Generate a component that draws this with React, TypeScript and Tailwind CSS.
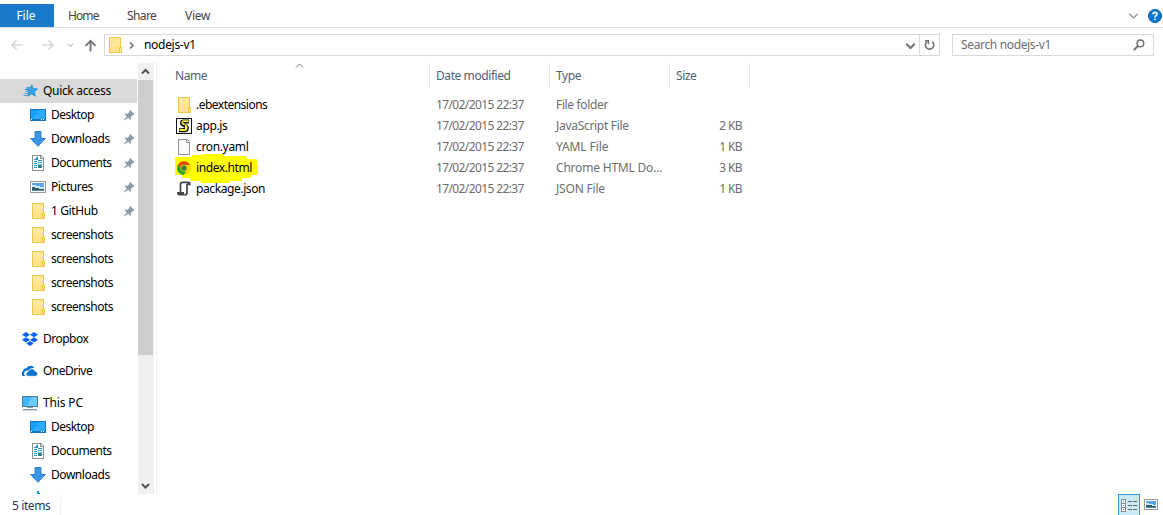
import type { ReactNode } from "react";

type Kind = "desktop" | "download" | "document" | "picture" | "folder" | "music";

function Folder() {
  return (
    <svg width="16" height="16" viewBox="0 0 16 16" shapeRendering="crispEdges">
      <path d="M2 0h12v10h1v6H2z" fill="#e9c84c" />
      <path d="M3 1h10v9h-1v5H3z" fill="#ffe79c" />
      <path d="M3 9h9v6H3z" fill="#ffe28a" />
      <path d="M13 11h1v4h-1z" fill="#ffe79c" />
    </svg>
  );
}

function Desktop() {
  return (
    <svg width="16" height="16" viewBox="0 0 16 16" shapeRendering="crispEdges">
      <path d="M0 2h16v12H0z" fill="#1677bd" />
      <path d="M1 3h14v9H1z" fill="#18a1fb" />
      <path d="M9 3h6v9H3z" fill="#2eabfc" />
      <path d="M1 12h1v1H1zM11 12h1v1h-1zM13 12h1v1h-1z" fill="#fff" />
    </svg>
  );
}

function Download() {
  return (
    <svg width="16" height="16" viewBox="0 0 16 16">
      <path d="M5 .5h6v7h4.3L8 15.3.7 7.5H5z" fill="#3b96e8" stroke="#2d82cf" />
    </svg>
  );
}

function Document() {
  return (
    <svg width="16" height="16" viewBox="0 0 16 16" shapeRendering="crispEdges">
      <path d="M2 0h9l3 3v13H2z" fill="#8a9090" />
      <path d="M3 1h7v3h3v11H3z" fill="#fff" />
      <path d="M11 1l2 2h-2z" fill="#e7e7e7" />
      <path d="M6 2h2v3H6zM4 4h2v1H4zM4 6h3v1H4zM8 5h4v1H8zM8 7h4v1H8zM4 8h3v1H4zM4 10h3v1H4zM4 12h3v1H4z" fill="#2592d5" />
      <path d="M8 10h4v3H8z" fill="#437889" />
      <path d="M8 9h4v1H8z" fill="#83c5f3" />
    </svg>
  );
}

function Picture({ compact = false }: { compact?: boolean }) {
  return (
    <svg width={compact ? 14 : 16} height={compact ? 11 : 12} viewBox="0 0 16 12" preserveAspectRatio="none" shapeRendering="crispEdges">
      <path d="M0 0h16v12H0z" fill="#999" />
      <path d="M1 1h14v10H1z" fill="#fff" />
      <path d="M2 2h12v8H2z" fill="#5aa5e9" />
      <path d="M2 4h4v1h4v1h4v2H2z" fill="#cde8f7" />
      <path d="M2 6h3v1h4v1h5v2H2z" fill="#315c61" />
      <path d="M2 9h12v1H2z" fill="#5285a9" />
    </svg>
  );
}

function QuickStar() {
  return (
    <svg width="16" height="16" viewBox="0 0 16 16">
      <path d="M4.5 4.5h4M2.5 6.5h4M3.5 8.5h3M2.5 10.5h4M1.5 12.5h4" stroke="#4a9dcc" />
      <path d="M9.8 1.8l1.5 3.9 4.2.2-3.2 2.9 1 4.4-3.7-2.5-3.8 2.5 1.3-4.4-2.9-2.9 3.9-.2z" fill="#34a4f3" stroke="#1785cc" strokeWidth=".8" />
    </svg>
  );
}

function Dropbox() {
  return (
    <svg width="16" height="16" viewBox="0 0 16 16">
      <path d="M4 1l4 2.7-4 2.5L0 3.7zM12 1l4 2.7-4 2.5-4-2.5zM4 6.2l4 2.6-4 2.6-4-2.6zM12 6.2l4 2.6-4 2.6-4-2.6zM4.3 12.4L8 9.9l3.7 2.5L8 15z" fill="#0b63f6" />
    </svg>
  );
}

function OneDrive() {
  return (
    <svg width="16" height="16" viewBox="0 0 16 16">
      <path d="M3.5 13H2a2.5 2.5 0 01-1-4.8 3.1 3.1 0 013.5-3A4.4 4.4 0 0112.4 5 5 5 0 007 8.2 2.8 2.8 0 003.5 13z" fill="#0871c9" />
      <path d="M6.2 13.3a2.3 2.3 0 01-.1-4.6 3.8 3.8 0 017.2-.5 2.6 2.6 0 01.5 5.1z" fill="#0871c9" stroke="#fff" strokeWidth=".8" />
    </svg>
  );
}

function Computer() {
  return (
    <svg width="16" height="16" viewBox="0 0 16 16" shapeRendering="crispEdges">
      <path d="M0 1h16v11H0z" fill="#477b98" />
      <path d="M1 2h14v9H1z" fill="#42b7fb" />
      <path d="M10 2h5v9H5z" fill="#6dcafe" />
      <path d="M5 12h6v1H5zM1 14h14v1H1z" fill="#879ba8" />
      <path d="M0 15h16v1H0z" fill="#d0d8dd" />
    </svg>
  );
}

function Pin() {
  return (
    <svg width="11" height="11" viewBox="0 0 11 11">
      <path d="M6.1 0l4.6 4.5-1.1.8-.8-.2-1.9 2 .2 2-.8.8-2.2-2.2L.5 10.5 0 10l2.8-3.5L.7 4.4l.8-.8 2.1.2 1.9-1.9-.2-.9z" fill="#8e9ba4" />
    </svg>
  );
}

function ScriptIcon() {
  return (
    <svg width="16" height="16" viewBox="0 0 16 16">
      <path d="M.5.5h15v15H.5z" fill="#fff" stroke="#111" shapeRendering="crispEdges" />
      <g fill="none" strokeLinejoin="round">
        <path d="M13 3.5H7.5C5.5 3.5 5.5 5.5 7 6.3l2.7 1.8C11.5 9.5 11 12.2 9 12.2H3" stroke="#111" strokeWidth="4" />
        <path d="M12.5 3.3H7.5C6 3.5 6 5 7.5 6l2.2 1.7C11 9.2 10.8 11.7 9 12H3.5" stroke="#f5ee25" strokeWidth="2" />
      </g>
      <path d="M7 4h4v1H7zM6 10h3v1H6zM7 7h2v1H7z" fill="#111" shapeRendering="crispEdges" />
      <path d="M8 3h2v1H8zM9 9h1v2H9z" fill="#fff" shapeRendering="crispEdges" />
    </svg>
  );
}

function Blank() {
  return (
    <svg width="16" height="16" viewBox="0 0 16 16" shapeRendering="crispEdges">
      <path d="M2 0h9l3 3v13H2z" fill="#929292" />
      <path d="M3 1h7v3h3v11H3z" fill="#fafafa" />
      <path d="M11 1l2 2h-2z" fill="#eee" />
    </svg>
  );
}

function Chrome() {
  return (
    <svg width="16" height="16" viewBox="0 0 16 16">
      <circle cx="8" cy="8" r="6.8" fill="#ffd400" />
      <path d="M1.9 5A6.8 6.8 0 0114.1 5H8a3 3 0 00-2.8 4.1z" fill="#e04a0c" />
      <path d="M2.1 4.5A6.8 6.8 0 008 14.8l2.7-4.5A3.1 3.1 0 015.2 9z" fill="#2ca52b" />
      <circle cx="8" cy="8" r="3.3" fill="#d5d822" />
      <circle cx="8" cy="8" r="2.6" fill="#3d7a34" />
    </svg>
  );
}

function JsonScroll() {
  return (
    <svg width="16" height="16" viewBox="0 0 16 16">
      <path d="M4.5 11V3.4c0-1.4.7-2 1.9-2h6.2M11 3v8.3c0 1.7-.8 2.5-2.2 2.5" fill="none" stroke="#444" strokeWidth="1.7" />
      <path d="M11 .8h2c1.2 0 1.7.8 1.7 2.4v1H11.5zM1 11h7c0 1.2.3 2 1.2 3.6H3.2C1.6 14.6.9 13.2 1 11z" fill="#444" />
    </svg>
  );
}

const icons: Record<Kind, ReactNode> = {
  desktop: <Desktop />,
  download: <Download />,
  document: <Document />,
  picture: <Picture />,
  folder: <Folder />,
  music: (
    <svg width="16" height="16" viewBox="0 0 16 16" shapeRendering="crispEdges">
      <path d="M7 0h2v2h1v1h1v3H9v7H7z" fill="#189be9" />
    </svg>
  ),
};

function Item({ kind, label, pinned, tracking }: { kind: Kind; label?: string; pinned?: boolean; tracking?: string }) {
  return (
    <div className="flex h-6 shrink-0 items-center pl-[30px] pr-[2px]">
      <span className="mr-[5px] flex w-4 justify-center">{icons[kind]}</span>
      <span className={"flex-1 whitespace-nowrap " + (tracking ?? "tracking-[-0.45px]")}>{label}</span>
      {pinned && <Pin />}
    </div>
  );
}

function Root({ icon, label, className = "" }: { icon: ReactNode; label: string; className?: string }) {
  return (
    <div className={"flex h-6 shrink-0 items-center gap-[5px] pl-[22px] " + className}>
      {icon}
      <span>{label}</span>
    </div>
  );
}

const files = [
  { icon: <Folder />, name: ".ebextensions", type: "File folder", size: "", nameTracking: "tracking-[-0.52px]", typeTracking: "tracking-[-0.35px]" },
  { icon: <ScriptIcon />, name: "app.js", type: "JavaScript File", size: "2 KB", nameTracking: "tracking-[-0.35px]", typeTracking: "tracking-[-0.3px]" },
  { icon: <Blank />, name: "cron.yaml", type: "YAML File", size: "1 KB", nameTracking: "tracking-[-0.35px]", typeTracking: "tracking-[-0.1px]" },
  { icon: <Chrome />, name: "index.html", type: "Chrome HTML Do...", size: "3 KB", marked: true, nameTracking: "tracking-[-0.4px]", typeTracking: "tracking-[-0.2px]" },
  { icon: <JsonScroll />, name: "package.json", type: "JSON File", size: "1 KB", nameTracking: "tracking-[-0.4px]", typeTracking: "tracking-[-0.2px]" },
];

function Chevron({ className = "", dir = "down", size = 9 }: { className?: string; dir?: "down" | "up" | "right"; size?: number }) {
  const d = { down: "M1 3l3.5 3.5L8 3", up: "M1 6.5L4.5 3 8 6.5", right: "M3 1.5l3 3-3 3" }[dir];
  return (
    <svg width={size} height={size} viewBox="0 0 9 9" className={className} fill="none" stroke="currentColor">
      <path d={d} />
    </svg>
  );
}

function Sidebar() {
  return (
    <nav className="flex h-[431px] w-[137px] flex-col overflow-hidden pt-4">
      <Root icon={<QuickStar />} label="Quick access" className="bg-[#d9d9d9] tracking-[-0.32px]" />
      <Item kind="desktop" label="Desktop" pinned tracking="tracking-[-0.55px]" />
      <Item kind="download" label="Downloads" pinned />
      <Item kind="document" label="Documents" pinned />
      <Item kind="picture" label="Pictures" pinned tracking="tracking-[-0.4px]" />
      <Item kind="folder" label="1 GitHub" pinned tracking="tracking-[-0.4px]" />
      <Item kind="folder" label="screenshots" tracking="tracking-[-0.52px]" />
      <Item kind="folder" label="screenshots" tracking="tracking-[-0.52px]" />
      <Item kind="folder" label="screenshots" tracking="tracking-[-0.52px]" />
      <Item kind="folder" label="screenshots" tracking="tracking-[-0.52px]" />
      <Root icon={<Dropbox />} label="Dropbox" className="mt-2 tracking-[-0.5px]" />
      <Root icon={<OneDrive />} label="OneDrive" className="mt-2 tracking-[-0.5px]" />
      <Root icon={<Computer />} label="This PC" className="mt-2 tracking-[-0.15px]" />
      <Item kind="desktop" label="Desktop" tracking="tracking-[-0.55px]" />
      <Item kind="document" label="Documents" />
      <Item kind="download" label="Downloads" />
      <Item kind="music" />
    </nav>
  );
}

export default function App() {
  return (
    <div className="flex h-[515px] w-[1163px] flex-col overflow-hidden bg-white font-['Noto_Sans','Open_Sans',sans-serif] text-[12px] leading-4 text-black">
      <header className="flex h-7 shrink-0 border-b border-[#dadbdc] pt-1 text-[#444]">
        <div className="flex w-[54px] items-center justify-center bg-[#1979ca] pr-0.5 text-white">File</div>
        <div className="ml-[14px] flex w-[59px] items-center tracking-[-0.9px]">Home</div>
        <div className="flex w-[58px] items-center tracking-[-0.6px]">Share</div>
        <div className="flex flex-1 items-center tracking-[-0.3px]">View</div>
        <div className="flex items-center gap-[9px] pr-[1px]">
          <Chevron size={11} className="text-[#888]" />
          <svg width="14" height="14" viewBox="0 0 14 14">
            <circle cx="7" cy="7" r="6.5" fill="#0878d7" stroke="#065ba5" />
            <path d="M5 5.3C5 2.7 9.2 2.8 9 5.2 8.9 6.6 7 6.6 7 8.4M7 9.5V11" fill="none" stroke="#fff" strokeWidth="1.6" />
          </svg>
        </div>
      </header>

      <div className="flex h-[35px] shrink-0 pt-1.5">
        <div className="flex h-[22px] w-[104px] items-center pl-[11px]">
          <svg width="13" height="12" viewBox="0 0 13 12" fill="none" stroke="#d8d8d8" strokeWidth="1.6"><path d="M12 6H1M5.5 1.5L1 6l4.5 4.5" /></svg>
          <svg className="ml-[17px]" width="13" height="12" viewBox="0 0 13 12" fill="none" stroke="#d8d8d8" strokeWidth="1.6"><path d="M1 6h11M7.5 1.5L12 6l-4.5 4.5" /></svg>
          <svg className="ml-[13px]" width="7" height="7" viewBox="0 0 7 7" fill="none" stroke="#d0d0d0" strokeWidth="1.4"><path d="M.8 1.7l2.7 2.7 2.7-2.7" /></svg>
          <svg className="ml-[10px]" width="13" height="13" viewBox="0 0 13 13" fill="none" stroke="#737373" strokeWidth="1.9"><path d="M6.5 12.5V2M1.5 6.8l5-5 5 5" /></svg>
        </div>
        <div className="flex h-[22px] w-[836px] items-center border border-[#d9d9d9] pl-[2px]">
          <Folder />
          <Chevron dir="right" className="ml-1 mr-2 stroke-[1.7] text-[#737373]" />
          <span className="flex-1 tracking-[-0.3px]">nodejs-v1</span>
          <Chevron size={11} className="mr-[3px] stroke-[1.8] text-[#737373]" />
          <div className="flex h-full w-5 items-center justify-center border-l border-[#d9d9d9]">
            <svg width="11" height="12" viewBox="0 0 11 12" fill="none" stroke="#737373" strokeWidth="1.6">
              <path d="M8.2 2.7A4.2 4.2 0 112.7 2.9M1 1.7h3.4v3.6" />
            </svg>
          </div>
        </div>
        <div className="ml-3 flex h-[22px] w-[202px] items-center justify-between border border-[#d9d9d9] pl-2 pr-2 text-[#6d6d6d]">
          <span className="tracking-[-0.35px]">Search nodejs-v1</span>
          <svg width="12" height="12" viewBox="0 0 12 12" fill="none" stroke="#737373"><circle cx="7.4" cy="4.4" r="3.3" strokeWidth="1.5" /><path d="M5 7L.8 11" strokeWidth="2" /></svg>
        </div>
      </div>

      <div className="flex h-[431px] shrink-0">
        <Sidebar />
        <div className="ml-px flex w-4 flex-col items-center bg-[#f0f0f0]">
          <div className="mr-px flex h-[17px] items-center"><Chevron dir="up" className="stroke-2 text-[#505050]" /></div>
          <div className="mr-px h-[275px] w-[15px] bg-[#cdcdcd]" />
          <div className="mb-1 mr-px mt-auto"><Chevron className="stroke-2 text-[#505050]" /></div>
        </div>
        <main className="relative ml-[2px] flex-1 border-l border-[#f0f0f0]">
          <Chevron dir="up" className="absolute left-[138px] top-[-2px] text-[#777]" />
          <div className="flex h-[25px] items-stretch text-[#4c607a]">
            <div className="flex w-[273px] items-center border-r border-[#e5e5e5] pl-[18px] tracking-[-0.4px]">Name</div>
            <div className="flex w-[120px] items-center border-r border-[#e5e5e5] pl-1.5 tracking-[-0.42px]">Date modified</div>
            <div className="flex w-[120px] items-center border-r border-[#e5e5e5] pl-1.5 tracking-[-0.4px]">Type</div>
            <div className="flex w-20 items-center border-r border-[#e5e5e5] pl-1.5 tracking-[-0.4px]">Size</div>
          </div>
          <div className="mt-1.5">
            {files.map((file) => (
              <div key={file.name} className="relative flex h-[21px] items-center text-[#6d6d6d]">
                {file.marked && (
                  <svg className="absolute left-[18px] top-[-3px]" width="84" height="30" viewBox="0 0 84 30">
                    <path d="M0 3h17V1h10V0h22v2h23v3h10v5h1v11h-7v3h-9v3H55v2H26v-2H15v-3H7v-3H0z" fill="#ff0" />
                  </svg>
                )}
                <div className="relative flex w-[279px] items-center pl-[19px] text-black">
                  {file.icon}
                  <span className={"ml-1 " + file.nameTracking}>{file.name}</span>
                </div>
                <span className="w-[120px] tracking-[-0.62px]">17/02/2015 22:37</span>
                <span className={"w-[120px] whitespace-nowrap " + file.typeTracking}>{file.type}</span>
                <span className="w-[66px] text-right tracking-[-0.6px]">{file.size}</span>
              </div>
            ))}
          </div>
        </main>
      </div>

      <footer className="flex h-[21px] shrink-0 text-[#1e395b]">
        <div className="flex w-[61px] items-center border-r border-[#f3f3f3] pl-3 pt-[3px] tracking-[-0.4px]">5 items</div>
        <div className="ml-auto flex">
          <div className="flex w-[22px] items-start justify-center border border-b-0 border-[#2a9fd2] bg-[#cbe8f6] pt-[4px]">
            <svg width="17" height="13" viewBox="0 0 17 13" shapeRendering="crispEdges">
              <path d="M0 0h5v13H0z" fill="#8a8a8a" /><path d="M1 1h3v3H1zM1 5h3v3H1zM1 9h3v3H1z" fill="#fff" />
              <path d="M2 2h1v1H2zM2 6h1v1H2z" fill="#3580c0" /><path d="M2 10h1v1H2z" fill="#d33" />
              <path d="M7 2h4v1H7zM12 2h4v1h-4zM7 6h4v1H7zM12 6h4v1h-4zM7 10h4v1H7zM12 10h4v1h-4z" fill="#666" />
            </svg>
          </div>
          <div className="ml-1 mr-[5px] pt-[5px]"><Picture compact /></div>
        </div>
      </footer>
    </div>
  );
}
